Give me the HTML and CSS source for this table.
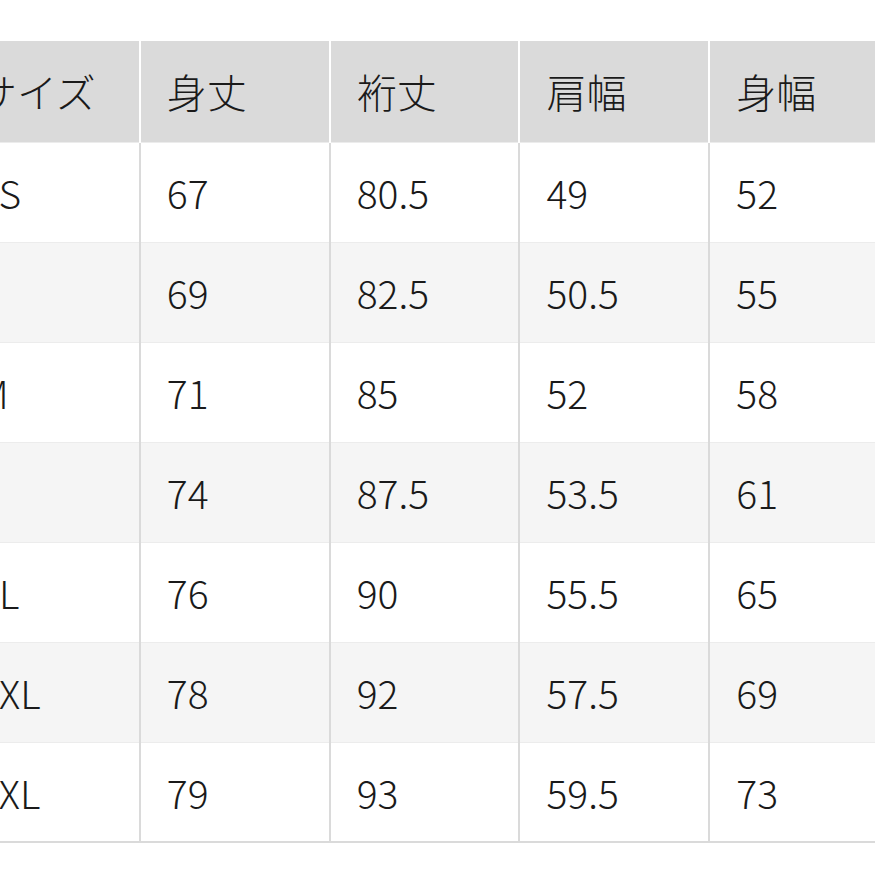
FILE: index.html
```html
<!DOCTYPE html>
<html lang="ja">
<head>
<meta charset="utf-8">
<link rel="stylesheet" href="styles.css">
</head>
<body>
<div class="wrap">
  <table class="size-table">
    <thead>
      <tr><th>サイズ</th><th>身丈</th><th>裄丈</th><th>肩幅</th><th>身幅</th><th>袖口</th></tr>
    </thead>
    <tbody>
      <tr><td>XS</td><td>67</td><td>80.5</td><td>49</td><td>52</td><td>11</td></tr>
      <tr><td>S</td><td>69</td><td>82.5</td><td>50.5</td><td>55</td><td>11.5</td></tr>
      <tr><td>M</td><td>71</td><td>85</td><td>52</td><td>58</td><td>12</td></tr>
      <tr><td>L</td><td>74</td><td>87.5</td><td>53.5</td><td>61</td><td>12.5</td></tr>
      <tr><td>XL</td><td>76</td><td>90</td><td>55.5</td><td>65</td><td>13</td></tr>
      <tr><td>XXL</td><td>78</td><td>92</td><td>57.5</td><td>69</td><td>13.5</td></tr>
      <tr><td>3XL</td><td>79</td><td>93</td><td>59.5</td><td>73</td><td>14</td></tr>
    </tbody>
  </table>
</div>
</body>
</html>
```

FILE: styles.css
```css
html, body {
  margin: 0;
  padding: 0;
  background: #ffffff;
  overflow: hidden;
}

body {
  font-family: "Noto Sans CJK JP", "Noto Sans", sans-serif;
  color: #1a1a1a;
}

.wrap {
  padding-top: 41px;
  margin-left: -50px;
  width: 1200px;
}

.size-table {
  border-collapse: collapse;
  table-layout: fixed;
  width: 1140px;
}

.size-table th,
.size-table td {
  width: 188px;
  height: 100px;
  padding: 0 0 0 26px;
  text-align: left;
  font-size: 39px;
  font-weight: 300;
  line-height: 40px;
  box-sizing: border-box;
  vertical-align: middle;
}

.size-table th {
  font-size: 40px;
  background: #dadada;
  border-right: 2px solid #ffffff;
  height: 101px;
}

.size-table th:first-child {
  padding-left: 27px;
}

.size-table td:first-child {
  padding-left: 28px;
}

.size-table td {
  border-right: 2px solid #dadada;
  border-top: 1px solid #ececec;
}

.size-table tbody tr:nth-child(even) td {
  background: #f5f5f5;
}

.size-table tbody tr:last-child td {
  border-bottom: 2px solid #dadada;
}
```
